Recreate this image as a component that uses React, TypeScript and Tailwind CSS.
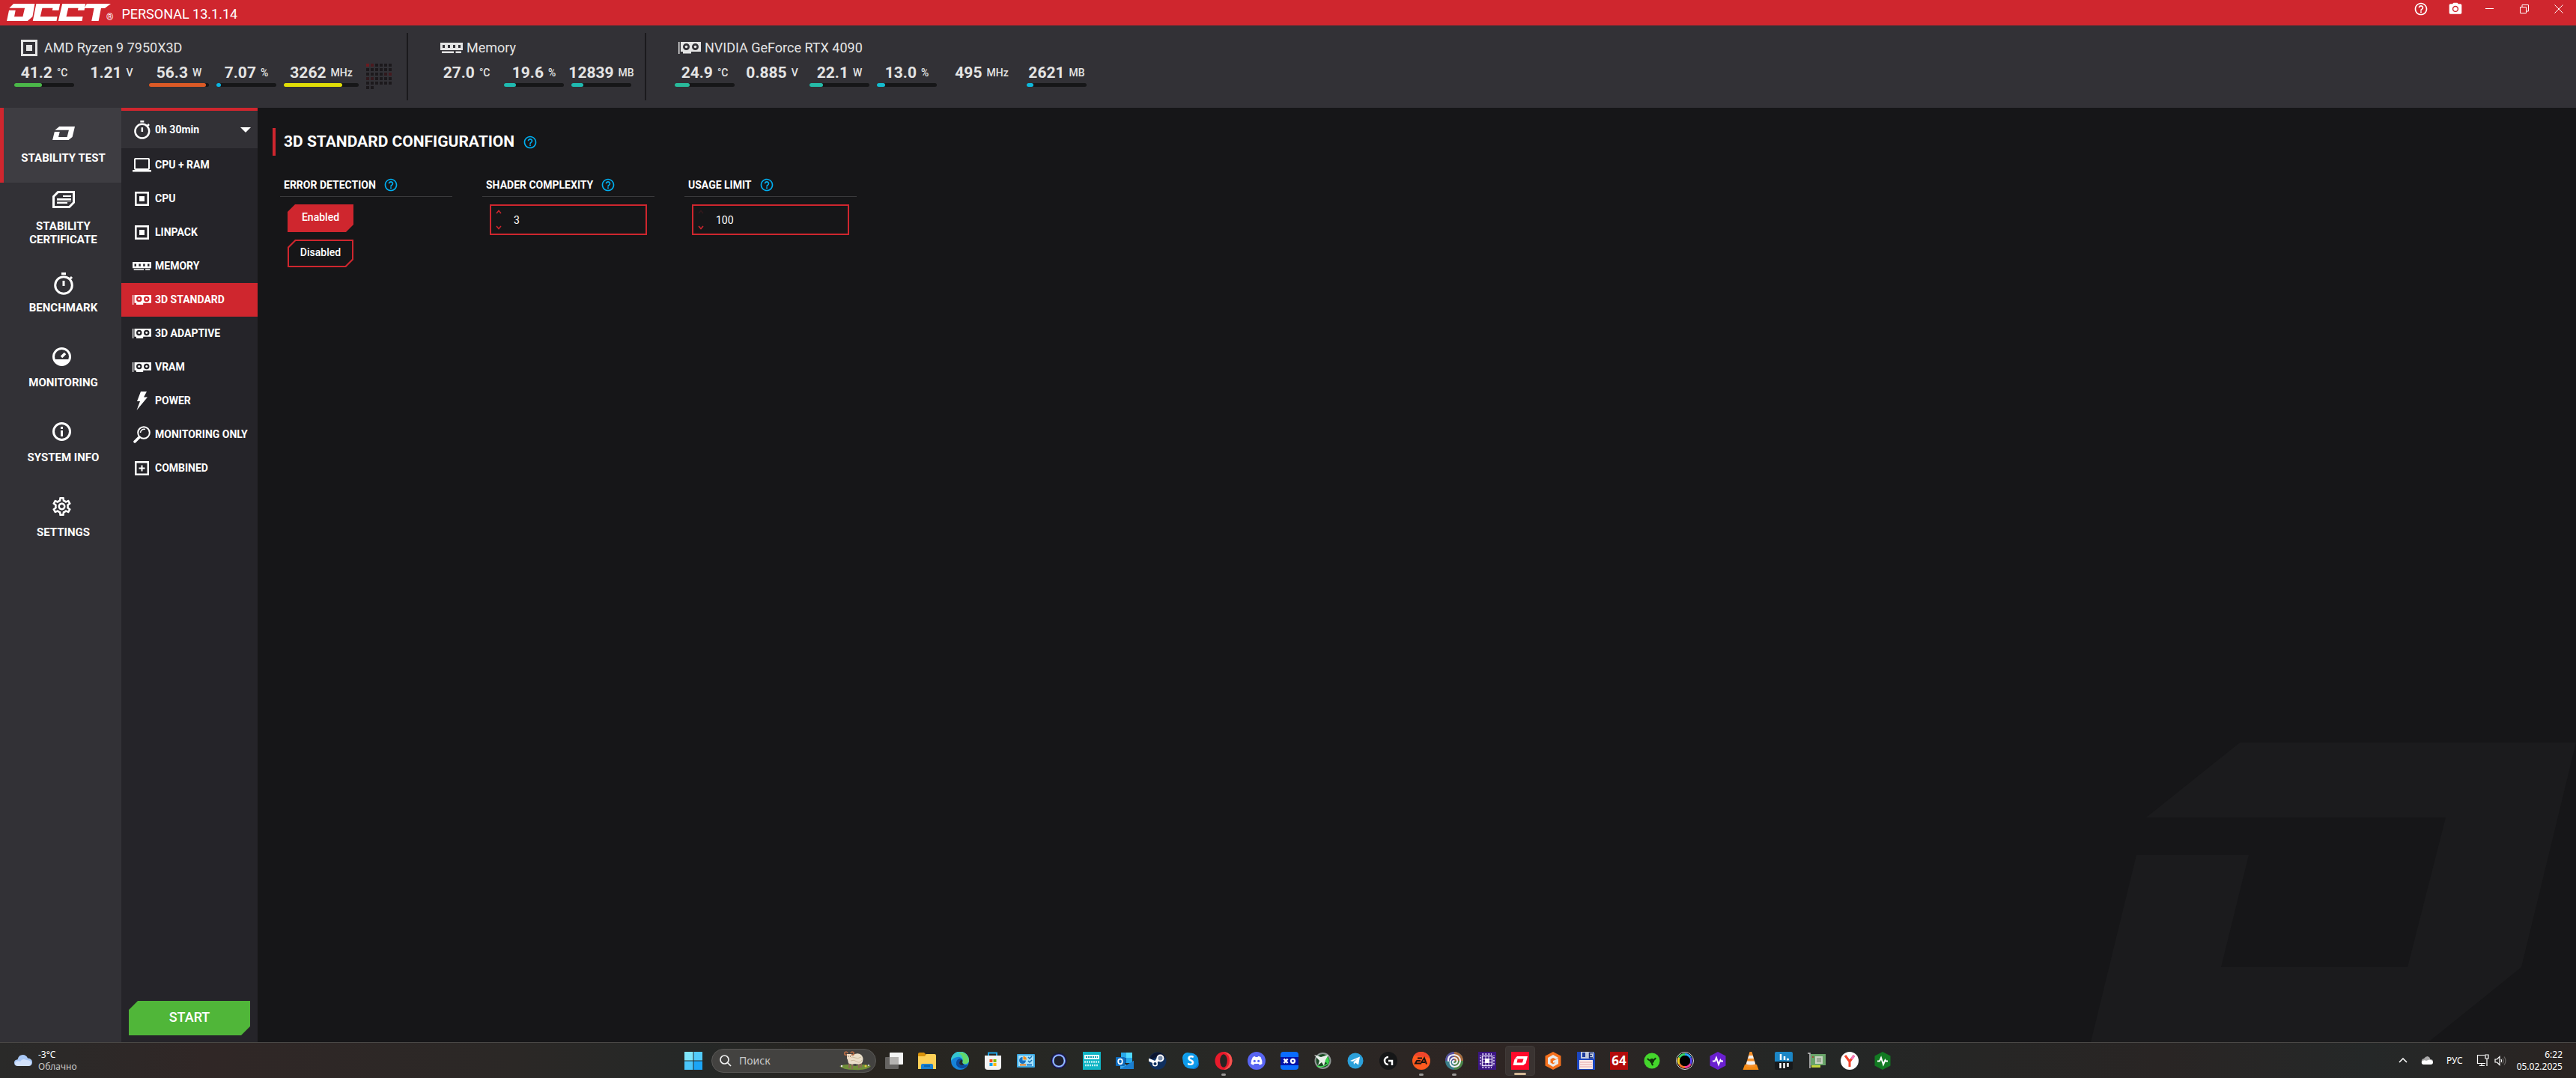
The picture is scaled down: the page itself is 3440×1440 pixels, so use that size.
import { useState, type ReactNode } from 'react'
import clsx from 'clsx'
import { MdCameraAlt, MdHelpOutline, MdOutlineSettings } from 'react-icons/md'

/* ---------- app icons ---------- */

type IconProps = { className?: string }

const OcctMark = ({ className }: IconProps) => (
  <svg viewBox="0 0 648 400" className={className} fill="currentColor" aria-hidden="true">
    <path d="M199 0H648L575 300L451 400H0L61 150H211L174 300H423L474 100H74Z" />
  </svg>
)

const OcctLogo = ({ className }: IconProps) => (
  <svg viewBox="0 0 416 69" className={className} fill="currentColor" role="img" aria-label="OCCT">
    <path d="M27 0H112L103 52L83 69H0L9 26H35L30 52H64L72 17H10Z" />
    <path d="M118 0H213L208 26H182L184 17H142L134 52H202L199 69H104Z" />
    <path d="M222 0H315L310 26H284L286 17H246L238 52H304L301 69H206Z" />
    <path d="M320 0H416L392 18H377L367 69H339L349 18H310Z" />
  </svg>
)

const CertificateIcon = ({ className }: IconProps) => (
  <svg viewBox="0 0 30 30" className={className} aria-hidden="true">
    <path d="M1.5 7.5L7.5 1.5H28.500V15.500L22.500 21.500H1.500Z" fill="none" stroke="currentColor" strokeWidth="3" />
    <path d="M14 6H25V8H14ZM6 10H25V12H6ZM6 12.800H25V14H6ZM6 15H20V17H6Z" fill="currentColor" />
  </svg>
)

const TimerIcon = ({ className }: IconProps) => (
  <svg viewBox="0 0 26 30" className={className} aria-hidden="true">
    <path d="M10 0H16V3H10ZM11.500 11H14.500V18H11.500Z" fill="currentColor" />
    <path d="M21 9L24 6" stroke="currentColor" strokeWidth="3" />
    <circle cx="13" cy="17" r="11.300" fill="none" stroke="currentColor" strokeWidth="3" />
  </svg>
)

const GaugeIcon = ({ className }: IconProps) => (
  <svg viewBox="0 0 30 30" className={className} aria-hidden="true">
    <circle cx="12.500" cy="12.500" r="11" fill="none" stroke="currentColor" strokeWidth="3" />
    <path d="M3 16H22L20 21L13 24L6 21Z" fill="currentColor" />
    <path d="M12 13L17 8" stroke="currentColor" strokeWidth="3.500" />
  </svg>
)

const InfoIcon = ({ className }: IconProps) => (
  <svg viewBox="0 0 30 30" className={className} aria-hidden="true">
    <circle cx="12.500" cy="12.500" r="11" fill="none" stroke="currentColor" strokeWidth="3" />
    <path d="M11 6H14V9H11ZM11 11H14V19H11Z" fill="currentColor" />
  </svg>
)

const LaptopIcon = ({ className }: IconProps) => (
  <svg viewBox="0 0 25 19" className={className} aria-hidden="true">
    <rect x="3" y="1" width="19" height="14" rx="1" fill="none" stroke="currentColor" strokeWidth="2" />
    <path d="M0 16H25V18.500H0Z" fill="currentColor" />
  </svg>
)

const CpuIcon = ({ className }: IconProps) => (
  <svg viewBox="0 0 22 22" className={className} aria-hidden="true">
    <rect x="1.500" y="1.500" width="19" height="19" fill="none" stroke="currentColor" strokeWidth="3" />
    <rect x="7" y="7" width="8" height="8" fill="currentColor" />
  </svg>
)

const RamIcon = ({ className }: IconProps) => (
  <svg viewBox="0 0 30 14" className={className} fill="currentColor" aria-hidden="true">
    <path
      fillRule="evenodd"
      d="M0 0H30V10H0ZM3 3V7H6V3ZM10 3V7H13V3ZM17 3V7H20V3ZM24 3V7H27V3Z"
    />
    <path d="M2 11.500H18V14H2ZM20.500 11.500H28V14H20.500Z" />
  </svg>
)

const GpuIcon = ({ className }: IconProps) => (
  <svg viewBox="0 0 30 16" className={className} fill="currentColor" aria-hidden="true">
    <path d="M0 0H1.500V16H0Z" />
    <path
      fillRule="evenodd"
      d="M3 0H30V13H17V15.500H6V13H3ZM10.500 2A4.500 4.500 0 1 0 10.500 11A4.500 4.500 0 1 0 10.500 2ZM22.500 2A4.500 4.500 0 1 0 22.500 11A4.500 4.500 0 1 0 22.500 2Z"
    />
    <circle cx="10.500" cy="6.500" r="1.800" />
    <circle cx="22.500" cy="6.500" r="1.800" />
  </svg>
)

const BoltIcon = ({ className }: IconProps) => (
  <svg viewBox="0 0 15 25" className={className} fill="currentColor" aria-hidden="true">
    <path d="M6 0H14L10 7.500H15L0.500 25L5 13H1Z" />
  </svg>
)

const MagnifierIcon = ({ className }: IconProps) => (
  <svg viewBox="0 0 23 23" className={className} fill="none" stroke="currentColor" aria-hidden="true">
    <circle cx="14" cy="9" r="7.800" strokeWidth="2" />
    <path d="M9.500 9A5 5 0 0 1 16 4.500" strokeWidth="1.500" />
    <path d="M8 15L2 21" strokeWidth="3.500" strokeLinecap="round" />
  </svg>
)

const CombinedIcon = ({ className }: IconProps) => (
  <svg viewBox="0 0 19 19" className={className} aria-hidden="true">
    <rect x="1.250" y="1.250" width="16.500" height="16.500" fill="none" stroke="currentColor" strokeWidth="2.500" />
    <path d="M9.500 5.500V13.500M5.500 9.500H13.500" stroke="currentColor" strokeWidth="2" />
  </svg>
)

/* ---------- sensors ---------- */

type Sensor = { value: string; unit: string; bar?: number; color?: string; wide?: boolean }

const cpuSensors: Sensor[] = [
  { value: '41.2', unit: '°C', bar: 46, color: 'bg-[#4bb749]' },
  { value: '1.21', unit: 'V' },
  { value: '56.3', unit: 'W', bar: 95, color: 'bg-[#dc5a26]' },
  { value: '7.07', unit: '%', bar: 8, color: 'bg-[#0cb6e3]' },
  { value: '3262', unit: 'MHz', bar: 78, color: 'bg-[#e0dd07]', wide: true },
]

const memorySensors: Sensor[] = [
  { value: '27.0', unit: '°C' },
  { value: '19.6', unit: '%', bar: 20, color: 'bg-[#1fbab0]' },
  { value: '12839', unit: 'MB', bar: 20, color: 'bg-[#1fbab0]' },
]

const gpuSensors: Sensor[] = [
  { value: '24.9', unit: '°C', bar: 25, color: 'bg-[#29ba9b]' },
  { value: '0.885', unit: 'V' },
  { value: '22.1', unit: 'W', bar: 22, color: 'bg-[#25bba8]' },
  { value: '13.0', unit: '%', bar: 14, color: 'bg-[#15bcce]' },
  { value: '495', unit: 'MHz', wide: true },
  { value: '2621', unit: 'MB', bar: 11, color: 'bg-[#0fb9dc]' },
]

// one square per logical core
const coreColors: Record<number, string> = {
  0: 'bg-[#6b1b21]',
  1: 'bg-[#4a1a1f]',
  16: 'bg-[#2f191d]',
  17: 'bg-[#451a1f]',
  18: 'bg-[#30191d]',
  19: 'bg-[#34191d]',
}

function SensorGroup({
  icon,
  name,
  sensors,
  className,
  children,
}: {
  icon: ReactNode
  name: string
  sensors: Sensor[]
  className?: string
  children?: ReactNode
}) {
  return (
    <section className={clsx('flex h-[90px] pt-2', className)}>
      <div>
        <h2 className="flex h-6 items-center gap-[5px] pl-[5px] text-[18px] leading-6">
          {icon}
          {name}
        </h2>
        <div className="mt-[9px] flex gap-[10px]">
          {sensors.map((s) => (
            <div key={s.value} className={s.wide ? 'w-[100px]' : 'w-20'}>
              <div className="flex h-6 items-center justify-center gap-[6px] whitespace-nowrap text-[21px] font-bold leading-6">
                {s.value}
                <span className="text-[14px] font-medium">{s.unit}</span>
              </div>
              {s.bar !== undefined && (
                <div className="mt-[2px] h-[5px] rounded-full bg-[#161618]">
                  <div className={clsx('h-full rounded-full', s.color)} style={{ width: `${s.bar}%` }} />
                </div>
              )}
            </div>
          ))}
          {children}
        </div>
      </div>
    </section>
  )
}

/* ---------- navigation ---------- */

const mainNav = [
  { title: 'Stability test', icon: <OcctMark className="mt-[5px] w-[30px]" />, active: true },
  { title: 'Stability certificate', icon: <CertificateIcon className="size-[30px]" /> },
  { title: 'Benchmark', icon: <TimerIcon className="mx-auto h-[30px]" /> },
  { title: 'Monitoring', icon: <GaugeIcon className="size-[30px]" /> },
  { title: 'System info', icon: <InfoIcon className="size-[30px]" /> },
  { title: 'Settings', icon: <MdOutlineSettings viewBox="2 2 24 24" className="size-[30px]" /> },
]

const testNav = [
  { title: 'CPU + RAM', icon: <LaptopIcon className="w-[25px]" /> },
  { title: 'CPU', icon: <CpuIcon className="w-[19px]" /> },
  { title: 'Linpack', icon: <CpuIcon className="w-[19px]" /> },
  { title: 'Memory', icon: <RamIcon className="w-[25px]" /> },
  { title: '3D Standard', icon: <GpuIcon className="w-[25px]" />, active: true },
  { title: '3D Adaptive', icon: <GpuIcon className="w-[25px]" /> },
  { title: 'VRAM', icon: <GpuIcon className="w-[25px]" /> },
  { title: 'Power', icon: <BoltIcon className="h-[25px]" /> },
  { title: 'Monitoring only', icon: <MagnifierIcon className="w-[23px]" /> },
  { title: 'Combined', icon: <CombinedIcon className="w-[19px]" /> },
]

/* ---------- configuration form ---------- */

const HelpButton = ({ label }: { label: string }) => (
  <button type="button" aria-label={`Help: ${label}`} className="text-[#00aeef]">
    <MdHelpOutline className="size-5" />
  </button>
)

function Field({ label, id, children }: { label: string; id: string; children: ReactNode }) {
  return (
    <div className="w-[230px]">
      <div className="flex h-[26px] items-center gap-[10px] border-b border-[#3a3a3c] pb-[6px] pl-[5px]">
        <label id={`${id}-label`} htmlFor={id} className="text-[14px] font-bold uppercase leading-5">
          {label}
        </label>
        <HelpButton label={label} />
      </div>
      <div className="mt-[10px] px-[10px]">{children}</div>
    </div>
  )
}

function Stepper({ id, initial, max }: { id: string; initial: number; max: number }) {
  const [value, setValue] = useState(initial)

  return (
    <div className="flex h-[41px] border-2 border-[#cf262e]">
      <div className="flex w-7 flex-col items-center justify-between py-[5px] text-[#cf262e]">
        <button
          type="button"
          aria-label="Increase"
          disabled={value >= max}
          onClick={() => setValue(value + 1)}
          className="-ml-[8px] disabled:opacity-15"
        >
          <svg viewBox="0 0 8 6" className="w-2" fill="none" stroke="currentColor" strokeWidth="1.500">
            <path d="M1 5L4 1.500L7 5" />
          </svg>
        </button>
        <button
          type="button"
          aria-label="Decrease"
          onClick={() => setValue(value - 1)}
          className="-ml-[8px]"
        >
          <svg viewBox="0 0 8 6" className="w-2" fill="none" stroke="currentColor" strokeWidth="1.500">
            <path d="M1 1L4 4.500L7 1" />
          </svg>
        </button>
      </div>
      <input
        id={id}
        inputMode="numeric"
        value={value}
        onChange={(e) => setValue(Number(e.target.value) || 0)}
        className="min-w-0 flex-1 bg-transparent pl-[2px] pt-[2px] text-[14px] outline-none"
      />
    </div>
  )
}

/* ---------- windows taskbar ---------- */

type TaskIcon = { name: string; art: ReactNode; state?: 'open' | 'active' }

const pulse = 'M5 12.500H8L10 8L13 17L15.500 11L16.500 12.500H19'
const hexagon = 'M12 0L22.500 5.500V18.500L12 24L1.500 18.500V5.500Z'

const taskIcons: TaskIcon[] = [
  {
    name: 'Task view',
    art: (
      <>
        <rect x="0" y="7" width="18" height="16" rx="1" fill="#666462" />
        <rect x="6" y="1" width="18" height="16" rx="1" fill="#f4f4f4" />
        <rect x="6" y="7" width="12" height="10" fill="#b5b3b1" />
      </>
    ),
  },
  {
    name: 'Explorer',
    art: (
      <>
        <path d="M0 3Q0 1 2 1H8L11 4V8H0Z" fill="#d9920a" />
        <path d="M0 6H9L11 3H22Q24 3 24 5V23H0Z" fill="#fdd057" />
        <path d="M4 23V18Q4 16 6 16H18Q20 16 20 18V23Z" fill="#1b7fd0" />
        <path d="M8 19H16" stroke="#0a5b9f" strokeWidth="1.500" />
      </>
    ),
  },
  {
    name: 'Edge',
    art: (
      <>
        <circle cx="12" cy="12" r="12" fill="#1683d8" />
        <path d="M0 11A12 12 0 0 1 24 12Q23 17 17 16Q14 15 15.500 12Q14 6 8 7Q3 8 0 12Z" fill="#35c5d0" />
        <path d="M14 .5A12 12 0 0 1 24 12Q23 17 17 16Q15 15 15.500 12Q17 5 10 2Z" fill="#63d96a" />
        <path d="M7 14Q8 9 13 9Q16 10 15.500 12Q13 17 19 18Q22 18 23 16Q20 23 13 22Q6 20 7 14Z" fill="#0c4a9b" />
        <path d="M12 12Q14 10 15.500 12Q14 16 18 17Q12 19 11 15Z" fill="#23272a" />
      </>
    ),
  },
  {
    name: 'Store',
    art: (
      <>
        <path d="M6 6V1.500H17V6" fill="none" stroke="#1fa5e8" strokeWidth="2" />
        <path d="M1 5H23V20Q23 24 19 24H5Q1 24 1 20Z" fill="#f3f3f3" />
        <path d="M7.500 10H11.500V14H7.500Z" fill="#f25022" />
        <path d="M12.500 10H16.500V14H12.500Z" fill="#7fba00" />
        <path d="M7.500 15H11.500V19H7.500Z" fill="#00a4ef" />
        <path d="M12.500 15H16.500V19H12.500Z" fill="#ffb900" />
      </>
    ),
  },
  {
    name: 'Control panel',
    art: (
      <>
        <rect x="0" y="3" width="24" height="18" rx="1" fill="#3ea9e2" />
        <rect x="2" y="5" width="20" height="14" fill="#a9e3fb" />
        <path d="M7.500 7A4.500 4.500 0 1 0 12 11.500H7.500Z" fill="#1673c4" />
        <path d="M8.500 6A4.500 4.500 0 0 1 13 10.500H8.500Z" fill="#f28c1c" />
        <path d="M15 7L17 9L20 6M15 12L17 14L20 11" fill="none" stroke="#1470b5" strokeWidth="1.500" />
        <path d="M4 17.500H12" stroke="#e87a18" strokeWidth="2" />
        <path d="M13 17.500H20" stroke="#1673c4" strokeWidth="2" />
      </>
    ),
  },
  {
    name: 'Cortana',
    art: (
      <>
        <circle cx="12" cy="12" r="11" fill="#191e3d" />
        <circle cx="12" cy="12" r="7.800" fill="#1e202c" stroke="#6a63e8" strokeWidth="2.500" />
        <circle cx="12" cy="12" r="7.500" fill="none" stroke="#9be1fa" strokeWidth="1.200" />
      </>
    ),
  },
  {
    name: 'Sound Blaster Command',
    art: (
      <>
        <rect width="24" height="24" fill="#10b5c5" />
        <rect x="2" y="4" width="20" height="6" fill="#e4fafb" />
        <path d="M4 7H20" stroke="#10a0b0" strokeWidth="2" strokeDasharray="2 1" />
        <path d="M2 13.500H22M3 18H21" stroke="#bdf0f3" strokeWidth="2.500" strokeDasharray="2 1" />
      </>
    ),
  },
  {
    name: 'Outlook',
    art: (
      <>
        <rect x="7" y="1" width="15" height="14" fill="#28a8ea" />
        <path d="M14 1H22V8H14Z" fill="#50d9ff" />
        <path d="M7 8H14V15H7Z" fill="#0f5fab" />
        <path d="M6 23V13L15 18L24 12V23Z" fill="#3aa6e8" />
        <path d="M6 23L24 12V23Z" fill="#1b7fd0" />
        <rect x="0" y="7" width="12" height="12" rx="1" fill="#0f6cbd" />
        <ellipse cx="6" cy="13" rx="2.800" ry="3.300" fill="none" stroke="#fff" strokeWidth="1.800" />
      </>
    ),
  },
  {
    name: 'Steam',
    art: (
      <>
        <circle cx="12" cy="12" r="11.500" fill="#10305f" />
        <path d="M.5 12A11.500 11.500 0 0 1 23 9L12 6Z" fill="#0c1530" />
        <path d="M1 11L9 14.500L13 9" fill="none" stroke="#fff" strokeWidth="4" strokeLinecap="round" />
        <circle cx="8.500" cy="16" r="2.800" fill="#10305f" stroke="#fff" strokeWidth="1.500" />
        <circle cx="15.500" cy="8.500" r="4" fill="#7d90ac" stroke="#fff" strokeWidth="2" />
      </>
    ),
  },
  {
    name: 'Skype',
    art: (
      <>
        <circle cx="8" cy="8" r="7" fill="#12a3ee" />
        <circle cx="16" cy="16" r="7" fill="#0b78d4" />
        <circle cx="12" cy="12" r="10.500" fill="#0e9bea" />
        <text x="12" y="18" textAnchor="middle" fontSize="17" fontWeight="700" fill="#fff">
          S
        </text>
      </>
    ),
  },
  {
    name: 'Opera',
    state: 'open',
    art: (
      <>
        <ellipse cx="12" cy="12" rx="11.500" ry="12" fill="#e81a2b" />
        <path d="M12 0Q23 1 23.500 12Q23 23 12 24Q20 20 20 12Q20 3 12 0Z" fill="#f5544f" />
        <ellipse cx="12" cy="12" rx="4.800" ry="8.800" fill="#262523" />
      </>
    ),
  },
  {
    name: 'Discord',
    art: (
      <>
        <circle cx="12" cy="12" r="12" fill="#5865f2" />
        <path
          d="M7 7Q9 6 10 6L10.500 7H13.500L14 6Q16 6 17.500 7Q20 12 19.500 16Q17.500 17.500 15.500 17.500L15 16H9L8.500 17.500Q6.500 17.500 4.500 16Q4.500 11 7 7Z"
          fill="#fff"
        />
        <circle cx="9.300" cy="12.300" r="1.600" fill="#5865f2" />
        <circle cx="14.700" cy="12.300" r="1.600" fill="#5865f2" />
      </>
    ),
  },
  {
    name: 'XO',
    art: (
      <>
        <rect width="24" height="24" rx="4" fill="#0a6cff" />
        <rect y="7" width="24" height="11" fill="#0513a8" />
        <path d="M4.500 9.500L9.500 15M9.500 9.500L4.500 15" stroke="#fff" strokeWidth="2.500" />
        <circle cx="16.500" cy="12.300" r="2.500" fill="none" stroke="#fff" strokeWidth="2.200" />
      </>
    ),
  },
  {
    name: 'Afterburner',
    art: (
      <>
        <circle cx="12.500" cy="12" r="11" fill="#8f9795" />
        <circle cx="12.500" cy="12" r="9" fill="#1b4a25" />
        <path d="M12 12L16 4A9 9 0 0 1 20 16Z" fill="#36d44a" />
        <path d="M1 4L10 7L20 4L16 11L14 19L11 14L6 18L8 12Z" fill="#e9efea" />
        <path d="M5 19Q12 22 20 15" stroke="#44e05a" strokeWidth="1.500" fill="none" />
      </>
    ),
  },
  {
    name: 'Telegram',
    art: (
      <>
        <circle cx="12" cy="12" r="10.500" fill="#2ba0da" />
        <path d="M5 12L18 6.500L16 17.500L12 14.500L10 17L9.500 13.500L14.500 9.500L8 13Z" fill="#fff" />
      </>
    ),
  },
  {
    name: 'G HUB',
    art: (
      <>
        <circle cx="12" cy="12" r="12" fill="#151617" />
        <path d="M12 7A5 5 0 1 0 12 17" fill="none" stroke="#fff" strokeWidth="2.500" />
        <path d="M12 12H17V18" fill="none" stroke="#fff" strokeWidth="2.500" />
      </>
    ),
  },
  {
    name: 'EA',
    state: 'open',
    art: (
      <>
        <circle cx="12" cy="12" r="12" fill="#ff5a1f" />
        <path d="M2 5A12 12 0 0 1 23 8Z" fill="#f0452b" />
        <path d="M7 8.500H13M5.500 12H11M10 15.500H4L6 12M10.500 16.500L16 8.500L19 16.500M13 14H17" fill="none" stroke="#1a1210" strokeWidth="2" />
      </>
    ),
  },
  {
    name: 'Ubisoft Connect',
    state: 'open',
    art: (
      <>
        <circle cx="12" cy="12" r="12" fill="#3a7e8b" />
        <path d="M12 0A12 12 0 0 1 24 12H12Z" fill="#a86a3c" />
        <path d="M12 0A12 12 0 0 0 0 12H12Z" fill="#58509d" />
        <path d="M12 24A12 12 0 0 0 24 12H12Z" fill="#4d8445" />
        <path
          d="M4 13Q3 4 12 4Q20 5 20 12.500Q19 20 12 20Q6 19 6.500 13Q8 8 12 8Q16 8.500 16 12.500Q15.500 16 12 16Q9.500 15.500 10 13Q11 11.500 12.500 12.500"
          fill="none"
          stroke="#f1f1f6"
          strokeWidth="2"
        />
      </>
    ),
  },
  {
    name: 'CPU-Z',
    art: (
      <>
        <rect width="24" height="24" fill="#3b1683" />
        <rect x="5.500" y="5.500" width="13" height="13" fill="none" stroke="#e5dcf6" strokeWidth="1.500" />
        <rect x="9" y="9" width="6" height="6" fill="#fff" />
        <path d="M5 3H19M5 21H19" stroke="#cbbcec" strokeWidth="2" strokeDasharray="1 1" />
        <path d="M3 5V19M21 5V19" stroke="#cbbcec" strokeWidth="2" strokeDasharray="1 1" />
        <path d="M10 6V9M14 6V9M10 15V18M14 15V18M6 10H9M6 14H9M15 10H18M15 14H18" stroke="#e5dcf6" strokeWidth="1" />
      </>
    ),
  },
  {
    name: 'OCCT',
    state: 'active',
    art: (
      <>
        <rect width="24" height="24" fill="#ff0a2b" />
        <path d="M8 6H22L19.500 15.500L16 18H2.500L4.500 10H8.500L7.500 14.500H15L16.500 9.500H4.500Z" fill="#fff" />
      </>
    ),
  },
  {
    name: 'Gigabyte Control',
    art: (
      <>
        <path d={hexagon} fill="#f4701d" />
        <path d="M12 4L19 8L16 10L12 8L8.500 10V14.500L12 16.500L15 14.500H12V12L19 9V16L12 20L5 16V8Z" fill="#e9e9e9" />
      </>
    ),
  },
  {
    name: 'Total Commander',
    art: (
      <>
        <path d="M0 0H22L24 2V24H0Z" fill="#1c46c0" />
        <rect x="5" y="0" width="17" height="9" fill="#c3ccdc" />
        <rect x="7" y="1" width="4" height="6" fill="#1c3b9c" />
        <rect x="3" y="11" width="18" height="12" fill="#fbeaea" />
        <path d="M4 14H20M4 17H20M4 20H20" stroke="#e6a5a5" strokeWidth="1" />
        <path d="M21 1.500H16.500V8H21M16.500 4.700H20" fill="none" stroke="#10246e" strokeWidth="1.500" />
      </>
    ),
  },
  {
    name: 'AIDA64',
    art: (
      <>
        <rect width="24" height="24" fill="#b30b0b" />
        <text x="12" y="18" textAnchor="middle" fontSize="17" fontWeight="700" fill="#fff">
          64
        </text>
      </>
    ),
  },
  {
    name: 'Razer',
    art: (
      <>
        <circle cx="12" cy="12" r="10.500" fill="#44d62c" />
        <path d="M12 12Q8 12 6 9M12 12Q16 11 17 8M12 12Q11 16 13.500 18" fill="none" stroke="#12330c" strokeWidth="2" />
        <circle cx="12" cy="12" r="3" fill="#12330c" />
      </>
    ),
  },
  {
    name: 'RGB Fusion',
    art: (
      <>
        <circle cx="12" cy="12" r="11.500" fill="#0d0d0d" stroke="#d8d8d8" strokeWidth="1" />
        <g fill="none" strokeWidth="3">
          <path d="M12 3.500A8.500 8.500 0 0 1 19.400 7.800" stroke="#27a5f5" />
          <path d="M19.400 7.800A8.500 8.500 0 0 1 19.400 16.200" stroke="#5a46ee" />
          <path d="M19.400 16.200A8.500 8.500 0 0 1 12 20.500" stroke="#f03a9a" />
          <path d="M12 20.500A8.500 8.500 0 0 1 4.600 16.200" stroke="#f7722b" />
          <path d="M4.600 16.200A8.500 8.500 0 0 1 4.600 7.800" stroke="#f3d024" />
          <path d="M4.600 7.800A8.500 8.500 0 0 1 12 3.500" stroke="#35d56a" />
        </g>
        <circle cx="12" cy="12" r="7" fill="#000" />
      </>
    ),
  },
  {
    name: 'HWMonitor Pro',
    art: (
      <>
        <path d={hexagon} fill="#6a1fd0" />
        <path d={pulse} fill="none" stroke="#fff" strokeWidth="2" />
      </>
    ),
  },
  {
    name: 'VLC',
    art: (
      <>
        <path d="M4 17H20L22.500 24H1.500Z" fill="#f48b14" />
        <path d="M10.500 0H13.500L19 19Q12 22 5 19Z" fill="#f7902a" />
        <path d="M9.300 5H14.700L15.900 9H8.100ZM7 12.500H17L18.200 16.500Q12 18.500 5.800 16.500Z" fill="#f0f0f0" />
      </>
    ),
  },
  {
    name: 'HWiNFO',
    art: (
      <>
        <rect width="24" height="24" rx="2" fill="#17191b" />
        <path d="M2 0H22Q24 0 24 2V13H0V2Q0 0 2 0Z" fill="#1b86c6" />
        <path d="M8 3V11M13 6V11" stroke="#fff" strokeWidth="2.500" />
        <circle cx="17.500" cy="10" r="1.500" fill="#fff" />
        <path d="M7.500 15V22M12.500 15V22M17.500 15V20" stroke="#fff" strokeWidth="2.500" />
      </>
    ),
  },
  {
    name: 'GPU-Z',
    art: (
      <>
        <path d="M0 2H3V22" fill="none" stroke="#c4c4c4" strokeWidth="1.500" />
        <rect x="4" y="3" width="20" height="15" fill="#69a469" />
        <rect x="10" y="6" width="10" height="10" fill="#c9d3c3" />
        <rect x="12" y="8" width="6" height="6" fill="#9ba895" />
        <path d="M5 18H17V21H5Z" fill="#c3d63c" />
        <circle cx="7" cy="7" r="1" fill="#b13a2b" />
      </>
    ),
  },
  {
    name: 'Yandex Browser',
    art: (
      <>
        <circle cx="12" cy="12" r="12" fill="#fff" />
        <path d="M6 5L12 13V20M12 13L18 5" fill="none" stroke="#f4432b" strokeWidth="3" />
        <path d="M14.500 9.500L18 5" stroke="#f37ac0" strokeWidth="3" />
      </>
    ),
  },
  {
    name: 'HWMonitor',
    art: (
      <>
        <path d={hexagon} fill="#127a22" />
        <path d={pulse} fill="none" stroke="#fff" strokeWidth="2" />
      </>
    ),
  },
]

function Taskbar() {
  return (
    <footer className="grid h-12 grid-cols-[1fr_auto_1fr] items-center border-t border-[#4a4846] bg-[linear-gradient(90deg,#2a2a29_0%,#302726_8%,#2b2826_20%,#252827_27%,#28241f_33%,#262926_44%,#2e2523_58%,#242726_70%,#292524_84%,#252828_92%,#2a2422_100%)] font-['Noto_Sans',sans-serif] text-white">
      <div className="flex items-center gap-2 pl-[19px]">
        <svg viewBox="0 0 24 15" className="w-6" aria-hidden="true">
          <path d="M5 15Q0 15 0 10.500Q0 6.500 4.500 6.200Q6 0 11.500 0Q16 0 18 4.500Q24 5 24 10Q24 15 19 15Z" fill="#a9c8f6" />
          <path d="M5 15Q1 14.500 1 11Q3 7 8 9Q11 4 16 7Q22 7 22.500 11Q22 14.500 19 15Z" fill="#d3e2fb" />
        </svg>
        <div className="text-[12px] leading-4">
          <div>-3°C</div>
          <div className="text-[#c9c8c7]">Облачно</div>
        </div>
      </div>

      <div className="flex items-center">
        <button type="button" aria-label="Start menu" className="flex w-11 justify-center">
          <svg viewBox="0 0 24 24" className="size-6">
            <path d="M0 0H11.500V11.500H0Z" fill="#7fe6fc" />
            <path d="M12.500 0H24V11.500H12.500Z" fill="#52cbfa" />
            <path d="M0 12.500H11.500V24H0Z" fill="#4ac6fa" />
            <path d="M12.500 12.500H24V24H12.500Z" fill="#1ba5f7" />
          </svg>
        </button>
        <div className="mx-[2px] flex h-8 w-[220px] items-center rounded-full border border-[#595856] bg-[#434240] pl-[10px] pr-[6px]">
          <svg viewBox="0 0 16 16" className="size-4 shrink-0" fill="none" stroke="#f0f0f0" strokeWidth="1.700" aria-hidden="true">
            <circle cx="6.500" cy="6.500" r="5.500" />
            <path d="M10.500 10.500L15 15" />
          </svg>
          <input
            aria-label="Поиск"
            placeholder="Поиск"
            className="ml-[10px] min-w-0 flex-1 bg-transparent text-[14px] outline-none placeholder:text-[#c9c8c7]"
          />
          <svg viewBox="0 0 42 26" className="w-[42px] shrink-0" aria-hidden="true">
            <path d="M0 20Q10 16 21 20Q32 16 42 20Q38 26 20 25Q4 25 0 20Z" fill="#71903a" />
            <path d="M12 14H14V23H12ZM16 14H18V24H16ZM25 14H27V23H25ZM28 13H30V22H28Z" fill="#8a6a55" />
            <path d="M10 8Q12 3 18 5Q26 1 30 6Q33 11 30 16Q26 19 21 17Q15 19 12 16Z" fill="#eadfca" />
            <path d="M14 9Q18 7 21 9T29 8M15 13Q19 11 23 14T30 12" stroke="#cdbb9d" strokeWidth="1" fill="none" />
            <path d="M10 4H16L16 10L13 13L10 10Z" fill="#f0dcc4" />
            <path d="M11.500 6.500H12.500V7.500H11.500ZM14 6.500H15V7.500H14Z" fill="#3c2c22" />
            <path d="M10 5Q6 6 7 2Q10 0 11 3M16 5Q20 6 19 2Q16 0 15 3" fill="none" stroke="#b46a44" strokeWidth="1.800" />
            <circle cx="3" cy="20" r="1.200" fill="#e9e4ec" />
            <circle cx="35" cy="20" r="1.500" fill="#e6c53c" />
            <circle cx="39" cy="19" r="1" fill="#e9e4ec" />
          </svg>
        </div>
        {taskIcons.map((icon) => (
          <button
            key={icon.name}
            type="button"
            aria-label={icon.name}
            className={clsx(
              'relative mx-[2px] flex size-10 items-center justify-center rounded',
              icon.state === 'active' && 'border border-[#403a38] bg-[#3a3331]'
            )}
          >
            <svg viewBox="0 0 24 24" className="size-6">
              {icon.art}
            </svg>
            {icon.state && (
              <span
                className={clsx(
                  'absolute bottom-0 h-[3px] rounded-full',
                  icon.state === 'active' ? 'w-4 bg-[#d3b896]' : 'w-[6px] bg-[#9a9896]'
                )}
              />
            )}
          </button>
        ))}
      </div>

      <div className="flex items-center justify-end pr-[18px] text-[12px] leading-4">
        <svg viewBox="0 0 12 7" className="w-3" fill="none" stroke="#fff" strokeWidth="1.500" aria-hidden="true">
          <path d="M1 6L6 1L11 6" />
        </svg>
        <svg viewBox="0 0 16 11" className="ml-[18px] w-4" aria-hidden="true">
          <path d="M3 9Q0 8 1 5Q2 3 4 3Q6 0 9 0Q12 1 12.500 4Q16 4 16 7L10 9Z" fill="#a9a9a9" />
          <path d="M3 11Q0 10 1 7Q4 4 7 6L11 4.500Q16 5 16 8Q16 11 13 11Z" fill="#fff" />
        </svg>
        <span className="ml-[18px]">РУС</span>
        <svg viewBox="0 0 17 17" className="ml-[18px] w-[17px]" fill="none" stroke="#fff" strokeWidth="1.200" aria-hidden="true">
          <path d="M11 1.500H1.500V12.500H12M7 12.500V15.500M4 15.500H11M12 1H16V6H12ZM14 6V16" />
        </svg>
        <svg viewBox="0 0 16 14" className="ml-[7px] w-4" fill="none" stroke="#fff" strokeWidth="1.200" aria-hidden="true">
          <path d="M1 5H3.500L7 1.500V12.500L3.500 9H1Z" />
          <path d="M9 5Q10.500 7 9 9" />
          <path d="M11 3.500Q13.500 7 11 10.500M13 1.500Q17 7 13 12.500" stroke="#6c6967" />
        </svg>
        <div className="ml-[14px] text-right">
          <div>6:22</div>
          <div>05.02.2025</div>
        </div>
      </div>
    </footer>
  )
}

/* ---------- page ---------- */

export default function App() {
  const [detection, setDetection] = useState('Enabled')

  return (
    <div className="flex min-h-screen flex-col bg-[#161618] font-[Roboto,sans-serif] text-white">
      <header className="flex h-[34px] items-start bg-[#cf262e] pl-[9px]">
        <OcctLogo className="mt-[5px] w-[139px]" />
        <span className="-ml-[6px] mt-[15px] text-[12px] leading-4">®</span>
        <h1 className="ml-[11px] mt-[7px] text-[18px] leading-6">PERSONAL 13.1.14</h1>
        <div className="ml-auto flex">
          <button type="button" aria-label="Help" className="flex h-6 w-[46px] items-center justify-center">
            <MdHelpOutline className="size-5" />
          </button>
          <button type="button" aria-label="Screenshot" className="flex h-6 w-[46px] items-center justify-center">
            <MdCameraAlt className="size-5" />
          </button>
          <button type="button" aria-label="Minimize" className="flex h-6 w-[46px] items-center justify-center">
            <svg viewBox="0 0 12 12" className="size-3" stroke="#fff">
              <path d="M0 5.500H11" />
            </svg>
          </button>
          <button type="button" aria-label="Restore" className="flex h-6 w-[46px] items-center justify-center">
            <svg viewBox="0 0 12 12" className="size-3" fill="none" stroke="#fff">
              <path d="M.5 3.500H8.500V11.500H.5ZM3 3V.5H11.500V9H9" />
            </svg>
          </button>
          <button type="button" aria-label="Close" className="flex h-6 w-[46px] items-center justify-center">
            <svg viewBox="0 0 12 12" className="size-3" stroke="#fff">
              <path d="M.5 .5L11.500 11.500M11.500 .5L.5 11.500" />
            </svg>
          </button>
        </div>
      </header>

      <div className="flex h-[110px] items-start bg-[#323136] pt-[10px] text-[#e4e4e4]">
        <SensorGroup
          icon={<CpuIcon className="mx-1 size-[22px]" />}
          name="AMD Ryzen 9 7950X3D"
          sensors={cpuSensors}
          className="border-r-2 border-[#1b1a1d] pl-[19px] pr-5"
        >
          <div className="grid grid-cols-6 content-start gap-[2px]">
            {Array.from({ length: 32 }, (_, i) => (
              <span key={i} className={clsx('size-1', coreColors[i] ?? 'bg-[#1c191c]')} />
            ))}
          </div>
        </SensorGroup>
        <SensorGroup
          icon={<RamIcon className="w-[30px]" />}
          name="Memory"
          sensors={memorySensors}
          className="border-r-2 border-[#1b1a1d] pl-[38px] pr-[18px]"
        />
        <SensorGroup
          icon={<GpuIcon className="w-[30px]" />}
          name="NVIDIA GeForce RTX 4090"
          sensors={gpuSensors}
          className="pl-[38px]"
        />
      </div>

      <div className="flex flex-1">
        <nav aria-label="Sections" className="w-[162px] bg-[#323136]">
          {mainNav.map((item) => (
            <button
              key={item.title}
              type="button"
              className={clsx(
                'flex h-[100px] w-full flex-col items-center justify-center gap-2 border-l-[5px] pb-[5px] pl-[2px] text-[15px] font-bold uppercase leading-[18px]',
                item.active ? 'border-[#cf262e] bg-[#3e3d42]' : 'border-transparent'
              )}
            >
              <span className="flex size-[30px] items-start">{item.icon}</span>
              <span className="max-w-[120px]">{item.title}</span>
            </button>
          ))}
        </nav>

        <nav aria-label="Tests" className="flex w-[182px] flex-col border-t-4 border-[#cf262e] bg-[#252429] text-[14px] font-bold">
          <div className="relative flex h-[50px] items-center bg-[#323136]">
            <TimerIcon className="pointer-events-none absolute left-[17px] h-[25px]" />
            <select aria-label="Test duration" className="h-full w-full appearance-none bg-transparent pl-[45px] outline-none">
              <option>0h 30min</option>
              <option>1h 00min</option>
            </select>
            <svg viewBox="0 0 14 7" className="pointer-events-none absolute right-[9px] w-[14px]" fill="currentColor">
              <path d="M0 0H14L7 7Z" />
            </svg>
          </div>
          {testNav.map((item) => (
            <button
              key={item.title}
              type="button"
              className={clsx(
                'flex h-[45px] items-center gap-[5px] pl-[15px] uppercase',
                item.active && 'bg-[#cf262e]'
              )}
            >
              <span className="flex w-[25px] justify-center">{item.icon}</span>
              {item.title}
            </button>
          ))}
          <button
            type="button"
            className="mx-[10px] mb-[9px] mt-auto h-[46px] bg-[#50b639] pb-1 text-[18px] font-medium [clip-path:polygon(12px_0,100%_0,100%_calc(100%-12px),calc(100%-12px)_100%,0_100%,0_12px)]"
          >
            START
          </button>
        </nav>

        <main className="relative flex-1 overflow-hidden pl-5 pt-[27px]">
          <OcctMark className="pointer-events-none absolute bottom-0 right-0 w-[648px] text-[#1b1b1d]" />
          <div className="relative">
            <div className="flex h-[37px] items-center gap-[11px] border-l-4 border-[#cf262e] pl-[11px]">
              <h2 className="text-[21px] font-bold">3D STANDARD CONFIGURATION</h2>
              <HelpButton label="3D Standard configuration" />
            </div>
            <div className="mt-[29px] flex flex-wrap gap-10 pl-[10px]">
              <Field label="Error detection" id="detection">
                <div id="detection" role="group" aria-labelledby="detection-label" className="flex flex-col items-start gap-[10px]">
                  {['Enabled', 'Disabled'].map((option) => (
                    <button
                      key={option}
                      type="button"
                      aria-pressed={detection === option}
                      onClick={() => setDetection(option)}
                      className="h-[37px] w-[88px] bg-[#cf262e] p-[2px] text-[14px] font-medium [clip-path:polygon(10px_0,100%_0,100%_calc(100%-10px),calc(100%-10px)_100%,0_100%,0_10px)]"
                    >
                      <span
                        className={clsx(
                          'flex h-full items-center justify-center pb-[3px] [clip-path:polygon(9px_0,100%_0,100%_calc(100%-9px),calc(100%-9px)_100%,0_100%,0_9px)]',
                          detection !== option && 'bg-[#161618]'
                        )}
                      >
                        {option}
                      </span>
                    </button>
                  ))}
                </div>
              </Field>
              <Field label="Shader complexity" id="shader">
                <Stepper id="shader" initial={3} max={8} />
              </Field>
              <Field label="Usage limit" id="usage">
                <Stepper id="usage" initial={100} max={100} />
              </Field>
            </div>
          </div>
        </main>
      </div>

      <Taskbar />
    </div>
  )
}
